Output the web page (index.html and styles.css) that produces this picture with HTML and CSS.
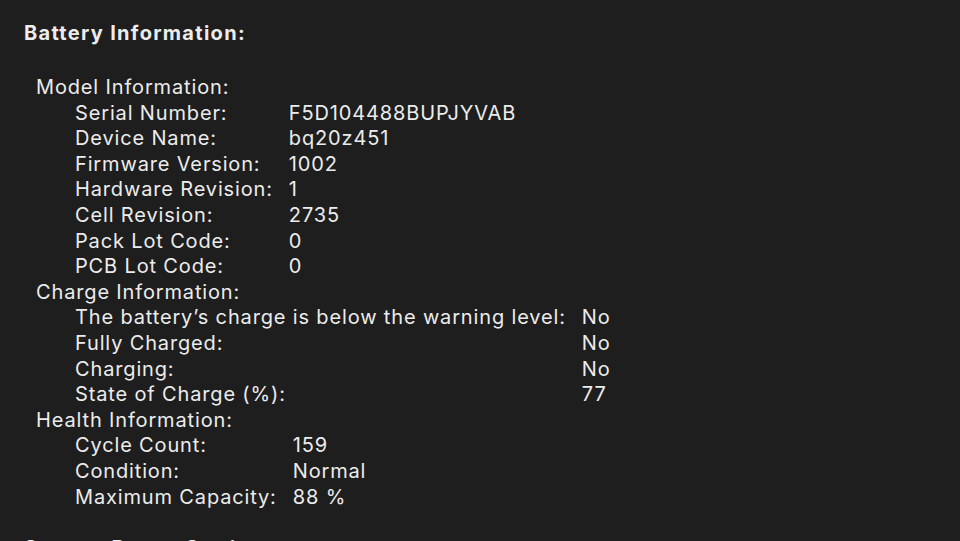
FILE: index.html
```html
<!DOCTYPE html>
<html>
<head>
<meta charset="utf-8">
<link rel="stylesheet" href="styles.css">
</head>
<body>
<main class="report">
  <h1 class="title">Battery Information:</h1>
  <section class="group">
    <h2 class="group-title">Model Information:</h2>
    <div class="table">
      <span class="k">Serial Number:</span><span class="v">F5D104488BUPJYVAB</span>
      <span class="k">Device Name:</span><span class="v">bq20z451</span>
      <span class="k">Firmware Version:</span><span class="v">1002</span>
      <span class="k">Hardware Revision:</span><span class="v">1</span>
      <span class="k">Cell Revision:</span><span class="v">2735</span>
      <span class="k">Pack Lot Code:</span><span class="v">0</span>
      <span class="k">PCB Lot Code:</span><span class="v">0</span>
    </div>
  </section>
  <section class="group">
    <h2 class="group-title">Charge Information:</h2>
    <div class="table">
      <span class="k">The battery’s charge is below the warning level:</span><span class="v">No</span>
      <span class="k">Fully Charged:</span><span class="v">No</span>
      <span class="k">Charging:</span><span class="v">No</span>
      <span class="k">State of Charge (%):</span><span class="v">77</span>
    </div>
  </section>
  <section class="group">
    <h2 class="group-title">Health Information:</h2>
    <div class="table">
      <span class="k">Cycle Count:</span><span class="v">159</span>
      <span class="k">Condition:</span><span class="v">Normal</span>
      <span class="k">Maximum Capacity:</span><span class="v">88 %</span>
    </div>
  </section>
  <h1 class="title next">System Power Settings:</h1>
</main>
</body>
</html>
```
FILE: styles.css
```css
html, body {
  margin: 0;
  padding: 0;
  background: #1e1e1e;
  height: 100%;
  overflow: hidden;
}
.report {
  font-family: Inter, "Noto Sans", sans-serif;
  color: #ececec;
  font-size: 20px;
  line-height: 25.6px;
  letter-spacing: 0.85px;
  padding: 20px 0 0 24px;
}
.title {
  margin: 0;
  font-size: 20px;
  font-weight: 700;
  line-height: 26px;
  letter-spacing: 1.3px;
}
.title.next {
  margin-top: 25px;
}
.group:first-of-type {
  margin-top: 29px;
}
.group-title {
  margin: 0 0 0 12px;
  font-size: 20px;
  font-weight: 400;
  line-height: 25.6px;
}
.table {
  display: grid;
  grid-template-columns: max-content max-content;
  column-gap: 16px;
  margin-left: 51px;
}
.k, .v {
  white-space: nowrap;
}
```
